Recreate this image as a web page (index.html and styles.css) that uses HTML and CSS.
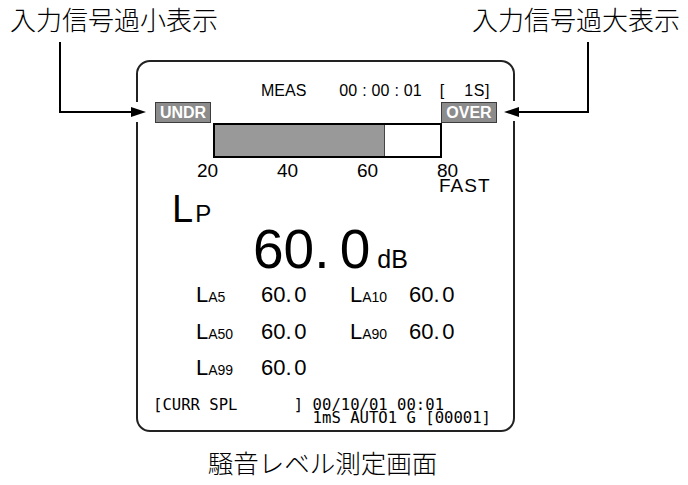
FILE: index.html
```html
<!DOCTYPE html>
<html lang="ja">
<head>
<meta charset="utf-8">
<title>騒音レベル測定画面</title>
<link rel="stylesheet" href="styles.css">
</head>
<body>
<div class="page">
  <header class="labels">
    <span>入力信号過小表示</span>
    <span>入力信号過大表示</span>
  </header>
  <div class="main">
    <section class="panel">
      <div class="status">
        <span class="meas">MEAS</span>
        <span class="time">00<span class="colon">:</span>00<span class="colon">:</span>01</span>
        <span class="range">[    1S]</span>
      </div>
      <div class="badges">
        <span class="badge">UNDR</span>
        <span class="badge">OVER</span>
      </div>
      <div class="bar"><div class="fill" style="width:170px"></div></div>
      <div class="scale"><span>20</span><span>40</span><span>60</span><span>80</span></div>
      <div class="mode">FAST</div>
      <div class="lp"><span class="lp-l">L</span><span class="lp-p">P</span></div>
      <div class="reading"><span class="value">60. 0</span><span class="unit">dB</span></div>
      <div class="stats">
        <span class="lbl">L<small>A5</small></span><span class="val">60. 0</span>
        <span class="lbl">L<small>A10</small></span><span class="val">60. 0</span>
        <span class="lbl">L<small>A50</small></span><span class="val">60. 0</span>
        <span class="lbl">L<small>A90</small></span><span class="val">60. 0</span>
        <span class="lbl">L<small>A99</small></span><span class="val">60. 0</span>
      </div>
      <pre class="footer">[CURR SPL      ] 00/10/01 00:01
                 1mS AUTO1 G [00001]</pre>
    </section>
    <p class="caption">騒音レベル測定画面</p>
  </div>
  <svg class="arrows" width="688" height="485" viewBox="0 0 688 485" aria-hidden="true">
    <rect x="133" y="102" width="7" height="20" fill="#fff"/>
    <rect x="511" y="101" width="7" height="20" fill="#fff"/>
    <polyline points="60,42 60,112 134,112" fill="none" stroke="#000" stroke-width="2"/>
    <polygon points="131,107 146,112 131,117" fill="#000"/>
    <polyline points="588,42 588,112 516,112" fill="none" stroke="#000" stroke-width="2"/>
    <polygon points="519,107 504,112 519,117" fill="#000"/>
  </svg>
</div>
</body>
</html>
```
FILE: styles.css
```css
* { box-sizing: border-box; }
html, body { margin: 0; padding: 0; background: #fff; }
body { font-family: "Liberation Sans", Arial, sans-serif; color: #000; }

.page {
  position: relative;
  width: 688px;
  height: 485px;
  overflow: hidden;
}

.labels {
  display: flex;
  justify-content: space-between;
  height: 60px;
  padding: 4px 8px 0 10px;
  font-family: "Noto Sans CJK JP", sans-serif;
  font-weight: 300;
  font-size: 26px;
  line-height: 30px;
}

.main {
  margin-left: 136px;
  width: 379px;
}

.panel {
  height: 372px;
  border: 2px solid #222;
  border-radius: 14px;
}

.status {
  display: flex;
  margin: 21px 0 0 123px;
  font-size: 16px;
  line-height: 16px;
}
.time { margin-left: 33px; }
.colon { margin: 0 5px; }
.range { margin-left: 18px; white-space: pre; letter-spacing: 0.5px; }

.badges {
  display: flex;
  justify-content: space-between;
  margin: 3px 0 0 17px;
  width: 342px;
}
.badge {
  width: 56px;
  height: 21px;
  background: #8c8c8c;
  border: 1px solid #3c3c3c;
  color: #fff;
  font-weight: bold;
  font-size: 16px;
  line-height: 19px;
  text-align: center;
}

.bar {
  margin-left: 75px;
  width: 229px;
  height: 35px;
  border: 2px solid #000;
  background: #fff;
}
.fill {
  height: 100%;
  background: #999;
  border-right: 1px solid #444;
}

.scale {
  display: grid;
  grid-template-columns: repeat(4, 80px);
  margin: 4.5px 0 0 59px;
  font-size: 19px;
  line-height: 15px;
}

.mode {
  margin-left: 301px;
  font-size: 19px;
  line-height: 15px;
  letter-spacing: 1px;
}

.lp {
  display: flex;
  align-items: baseline;
  height: 30px;
  margin: 1.3px 0 0 34px;
  line-height: 30px;
}
.lp-l { font-size: 38px; }
.lp-p { font-size: 24px; margin-left: 2px; }

.reading {
  display: flex;
  align-items: baseline;
  height: 44px;
  margin: 3px 0 0 115px;
  line-height: 44px;
}
.value { font-size: 55px; word-spacing: -5px; }
.unit { font-size: 25px; margin-left: 7px; }

.stats {
  display: grid;
  grid-template-columns: 65px 89px 59px auto;
  margin: 7.6px 0 0 58px;
  font-size: 22px;
  line-height: 34.5px;
}
.stats small { font-size: 14px; }
.val { word-spacing: -3.5px; }

.footer {
  margin: 11px 0 0 15px;
  font-family: "DejaVu Sans Mono", monospace;
  font-size: 15.6px;
  line-height: 13px;
}

.caption {
  margin: 15px 0 0;
  padding-right: 6px;
  text-align: center;
  font-family: "Noto Sans CJK JP", sans-serif;
  font-weight: 300;
  font-size: 25.5px;
  line-height: 30px;
}

.arrows {
  position: absolute;
  left: 0;
  top: 0;
  pointer-events: none;
}
```
